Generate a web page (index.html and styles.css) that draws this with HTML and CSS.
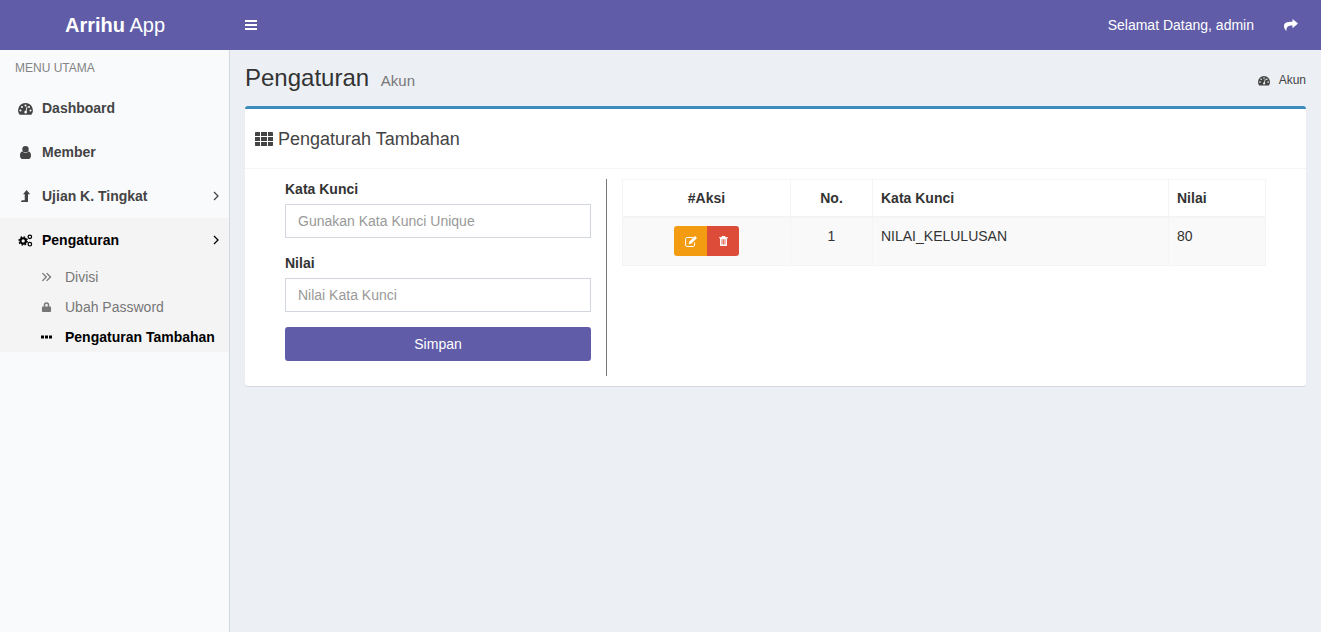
FILE: index.html
```html
<!DOCTYPE html>
<html>
<head>
    <title>Pengaturan Akun</title>
    <link rel="stylesheet" href="styles.css">
</head>
<body>
    <svg class="sprites" width="0" height="0">
        <symbol id="i-gauge" viewBox="0 0 16 14"><path fill-rule="evenodd" d="M8 1a8 8 0 0 0-8 8c0 1.6.5 3.1 1.3 4.3.2.3.4.4.7.4h12c.3 0 .5-.1.7-.4.8-1.2 1.3-2.7 1.3-4.3a8 8 0 0 0-8-8zM8 2.6a1 1 0 1 1 0 2.2 1 1 0 0 1 0-2.2zM4.2 4.200a1 1 0 1 1 0 2.200 1 1 0 0 1 0-2.200zM11.800 4.200a1 1 0 1 1 0 2.200 1 1 0 0 1 0-2.200zM2.600 8a1 1 0 1 1 0 2.200 1 1 0 0 1 0-2.200zM13.400 8a1 1 0 1 1 0 2.200 1 1 0 0 1 0-2.200zM9.300 4.800l.9.3-1.100 4.700c.5.400.7 1 .5 1.600-.3.800-1.100 1.200-1.900.9-.8-.3-1.200-1.100-.9-1.900.2-.6.700-1 1.300-1z"/></symbol>
        <symbol id="i-user" viewBox="0 0 11 13"><path d="M5.500 0a3.200 3.200 0 1 1 0 6.400 3.200 3.200 0 0 1 0-6.400zM2.600 5.600c.7.900 1.700 1.500 2.900 1.500s2.200-.6 2.900-1.500c1.700.2 2.600 1.600 2.600 3.900 0 2-1 3.500-2.300 3.500H2.300C1 13 0 11.500 0 9.500c0-2.300.9-3.700 2.600-3.900z"/></symbol>
        <symbol id="i-level" viewBox="0 0 9 12"><path d="M5.500 0l3.300 4H6.800v6.700c0 .2-.1.300-.3.300H.6c-.2 0-.3-.1-.3-.3l.9-1.200c.1-.1.2-.1.3-.1h2.300V4H2.200z"/></symbol>
        <symbol id="i-cogs" viewBox="0 0 16 14"><g fill="none" stroke="currentColor"><circle cx="5.500" cy="7.500" r="2.900" stroke-width="2.300"/><circle cx="5.500" cy="7.500" r="4.400" stroke-width="1.500" stroke-dasharray="1.700 1.750"/><circle cx="12.700" cy="3" r="1.900" stroke-width="1.300"/><circle cx="12.700" cy="11" r="1.900" stroke-width="1.300"/></g></symbol>
        <symbol id="i-right" viewBox="0 0 6 10"><path d="M1 1l4 4-4 4" fill="none" stroke="currentColor" stroke-width="1.300"/></symbol>
        <symbol id="i-double" viewBox="0 0 9 9"><path d="M.8 1l3.500 3.500L.8 8M4.600 1l3.500 3.500L4.600 8" fill="none" stroke="currentColor" stroke-width="1.200"/></symbol>
        <symbol id="i-lock" viewBox="0 0 10 11"><path d="M2 5V3.200a3 3 0 0 1 6 0V5h1.200c.4 0 .8.400.8.800v4.400c0 .4-.4.800-.8.800H.8c-.4 0-.8-.4-.8-.8V5.800C0 5.400.4 5 .8 5zm1.600 0h2.800V3.200a1.400 1.400 0 0 0-2.800 0z"/></symbol>
        <symbol id="i-dots" viewBox="0 0 11 3"><path d="M0 0h3v3H0zM4 0h3v3H4zM8 0h3v3H8z"/></symbol>
        <symbol id="i-th" viewBox="0 0 18 14"><path d="M0 1c0-.6.400-1 1-1h3.600c.3 0 .4.100.4.400v3.200c0 .3-.1.400-.4.400H0zM6 0h6v4H6zM13 .4c0-.3.100-.4.400-.4H17c.6 0 1 .4 1 1v3h-5zM0 5h5v4H0zM6 5h6v4H6zM13 5h5v4h-5zM0 10h5v4H1c-.6 0-1-.4-1-1zM6 10h6v4H6zM13 10h5v3c0 .6-.4 1-1 1h-4z"/></symbol>
        <symbol id="i-share" viewBox="0 0 14 12"><path d="M8.500 0L14 4.600 8.500 9.200V6.400C4.600 6.400 2.300 7 2.400 12 .6 10.200 0 8.700 0 7c0-3.400 3-4.200 8.500-4.200z"/></symbol>
        <symbol id="i-edit" viewBox="0 0 12 11"><path d="M8 1.500H2C1.200 1.500.6 2.100.6 2.900v6.200c0 .8.600 1.400 1.400 1.400h6.200c.8 0 1.400-.6 1.400-1.400V6.500" fill="none" stroke="currentColor"/><path d="M10 0l2 2-5.800 5.800-2.500.5.500-2.500z"/></symbol>
        <symbol id="i-trash" viewBox="0 0 9 10"><path fill-rule="evenodd" d="M3 0h3l.7 1.300H9v1H8v7c0 .4-.3.700-.7.700H1.700c-.4 0-.7-.3-.7-.7v-7H0v-1h2.300zM2.600 3.300v5.200h.8V3.300zM4.100 3.300v5.200h.8V3.300zM5.600 3.300v5.200h.8V3.300z"/></symbol>
    </svg>

    <header class="topbar">
        <a class="logo"><b>Arrihu</b> App</a>
        <a class="toggle">
            <span></span><span></span><span></span>
        </a>
        <div class="topbar-right">
            <span>Selamat Datang, admin</span>
            <svg class="icon-share"><use href="#i-share"/></svg>
        </div>
    </header>

    <div class="wrapper">
        <aside class="sidebar">
            <div class="menu-title">MENU UTAMA</div>
            <a class="menu-item">
                <svg class="menu-icon"><use href="#i-gauge"/></svg>
                <span>Dashboard</span>
            </a>
            <a class="menu-item">
                <svg class="menu-icon"><use href="#i-user"/></svg>
                <span>Member</span>
            </a>
            <a class="menu-item">
                <svg class="menu-icon"><use href="#i-level"/></svg>
                <span>Ujian K. Tingkat</span>
                <svg class="menu-arrow"><use href="#i-right"/></svg>
            </a>
            <div class="menu-open">
                <a class="menu-item active">
                    <svg class="menu-icon"><use href="#i-cogs"/></svg>
                    <span>Pengaturan</span>
                    <svg class="menu-arrow"><use href="#i-right"/></svg>
                </a>
                <ul class="submenu">
                    <li><svg class="sub-icon"><use href="#i-double"/></svg>Divisi</li>
                    <li><svg class="sub-icon"><use href="#i-lock"/></svg>Ubah Password</li>
                    <li class="current"><svg class="sub-icon"><use href="#i-dots"/></svg>Pengaturan Tambahan</li>
                </ul>
            </div>
        </aside>

        <main class="content">
            <div class="content-header">
                <h1>Pengaturan <small>Akun</small></h1>
                <div class="breadcrumb">
                    <svg class="crumb-icon"><use href="#i-gauge"/></svg>
                    <span>Akun</span>
                </div>
            </div>

            <section class="box">
                <div class="box-header">
                    <svg class="th-icon"><use href="#i-th"/></svg>
                    <h3>Pengaturah Tambahan</h3>
                </div>
                <div class="box-body">
                    <form class="form-col">
                        <label for="kunci">Kata Kunci</label>
                        <input type="text" id="kunci" placeholder="Gunakan Kata Kunci Unique">
                        <label for="nilai">Nilai</label>
                        <input type="text" id="nilai" placeholder="Nilai Kata Kunci">
                        <button type="button">Simpan</button>
                    </form>
                    <div class="table-col">
                        <table>
                            <thead>
                                <tr>
                                    <th class="col-aksi center">#Aksi</th>
                                    <th class="col-no center">No.</th>
                                    <th class="col-kunci">Kata Kunci</th>
                                    <th>Nilai</th>
                                </tr>
                            </thead>
                            <tbody>
                                <tr>
                                    <td class="center">
                                        <div class="btn-group">
                                            <a class="btn-edit"><svg><use href="#i-edit"/></svg></a>
                                            <a class="btn-delete"><svg><use href="#i-trash"/></svg></a>
                                        </div>
                                    </td>
                                    <td class="center">1</td>
                                    <td>NILAI_KELULUSAN</td>
                                    <td>80</td>
                                </tr>
                            </tbody>
                        </table>
                    </div>
                </div>
            </section>
        </main>
    </div>
</body>
</html>
```

FILE: styles.css
```css
* {
    box-sizing: border-box;
}

body {
    margin: 0;
    font-family: "Liberation Sans", Arial, sans-serif;
    font-size: 14px;
    line-height: 20px;
    color: #333;
    background-color: #ecf0f5;
}

svg {
    fill: currentColor;
}

.sprites {
    position: absolute;
}

/* top bar */
.topbar {
    display: flex;
    align-items: center;
    height: 50px;
    background-color: #605ca8;
    color: #fff;
}

.logo {
    width: 230px;
    text-align: center;
    font-size: 20px;
    line-height: 50px;
}

.toggle {
    display: flex;
    flex-direction: column;
    gap: 2px;
    width: 12px;
    margin-left: 15px;
}

.toggle span {
    display: block;
    height: 2px;
    background-color: #fff;
}

.topbar-right {
    display: flex;
    align-items: center;
    margin-left: auto;
    padding-right: 23px;
}

.icon-share {
    width: 14px;
    height: 12px;
    margin-left: 30px;
}

/* sidebar */
.wrapper {
    display: flex;
    min-height: 582px;
}

.sidebar {
    width: 230px;
    flex-shrink: 0;
    background-color: #f9fafc;
    border-right: 1px solid #d2d6de;
}

.menu-title {
    height: 36px;
    padding: 8px 15px 0;
    font-size: 12px;
    line-height: 20px;
    color: #848484;
}

.menu-item {
    display: flex;
    align-items: center;
    height: 44px;
    padding: 0 10px 0 18px;
    font-weight: bold;
    color: #444;
}

.menu-icon {
    width: 15px;
    height: 13px;
    margin-right: 9px;
}

.menu-arrow {
    width: 6px;
    height: 10px;
    margin-left: auto;
}

.menu-open {
    background-color: #f4f4f5;
}

.menu-item.active {
    color: #000;
}

.submenu {
    margin: 0;
    padding: 0 0 0 41px;
    list-style: none;
    color: #777;
}

.submenu li {
    display: flex;
    align-items: center;
    height: 30px;
    white-space: nowrap;
}

.sub-icon {
    width: 11px;
    height: 10px;
    margin-right: 13px;
}

.submenu .current {
    font-weight: bold;
    color: #000;
}

/* content */
.content {
    flex: 1;
    padding: 15px 15px 0;
}

.content-header {
    display: flex;
    justify-content: space-between;
    height: 41px;
}

h1 {
    margin: 0;
    font-size: 24px;
    font-weight: normal;
    line-height: 26px;
    color: #333;
}

h1 small {
    margin-left: 5px;
    font-size: 15px;
    color: #777;
}

.breadcrumb {
    display: flex;
    align-items: center;
    height: 30px;
    font-size: 12px;
    color: #444;
}

.crumb-icon {
    width: 12px;
    height: 11px;
    margin-right: 9px;
}

.box {
    height: 280px;
    background-color: #fff;
    border-top: 3px solid #3c8dbc;
    border-radius: 3px;
    box-shadow: 0 1px 1px rgba(0, 0, 0, 0.1);
}

.box-header {
    display: flex;
    align-items: center;
    height: 60px;
    padding: 0 10px;
    border-bottom: 1px solid #f4f4f4;
    color: #444;
}

.th-icon {
    width: 18px;
    height: 14px;
    margin-right: 5px;
}

h3 {
    margin: 0;
    font-size: 18px;
    font-weight: normal;
    line-height: 20px;
}

.box-body {
    display: flex;
    align-items: flex-start;
    padding: 10px 0 0 40px;
}

.form-col {
    width: 322px;
    height: 197px;
    padding-right: 15px;
    border-right: 1px solid #777;
}

label {
    display: block;
    margin-bottom: 5px;
    font-weight: bold;
}

input {
    display: block;
    width: 100%;
    height: 34px;
    margin-bottom: 15px;
    padding: 6px 12px;
    font: inherit;
    color: #555;
    border: 1px solid #d2d6de;
    border-radius: 0;
}

input::placeholder {
    color: #999;
}

button {
    display: block;
    width: 100%;
    height: 34px;
    padding: 0;
    font: inherit;
    color: #fff;
    background-color: #605ca8;
    border: none;
    border-radius: 3px;
}

.table-col {
    padding-left: 15px;
}

table {
    width: 644px;
    border-collapse: collapse;
    table-layout: fixed;
    border: 1px solid #f4f4f4;
}

th,
td {
    padding: 8px;
    text-align: left;
    vertical-align: top;
    border: 1px solid #f4f4f4;
}

th {
    height: 37px;
    border-bottom-width: 2px;
}

td {
    height: 48px;
    background-color: #f9f9f9;
}

.col-aksi {
    width: 168px;
}

.col-no {
    width: 82px;
}

.col-kunci {
    width: 296px;
}

table .center {
    text-align: center;
}

.btn-group {
    display: inline-flex;
    vertical-align: top;
    height: 30px;
    border-radius: 3px;
    overflow: hidden;
}

.btn-group a {
    display: flex;
    align-items: center;
    justify-content: center;
    color: #fff;
}

.btn-edit {
    width: 33px;
    background-color: #f39c12;
}

.btn-delete {
    width: 32px;
    background-color: #dd4b39;
}

.btn-edit svg {
    width: 12px;
    height: 11px;
}

.btn-delete svg {
    width: 9px;
    height: 10px;
}
```
